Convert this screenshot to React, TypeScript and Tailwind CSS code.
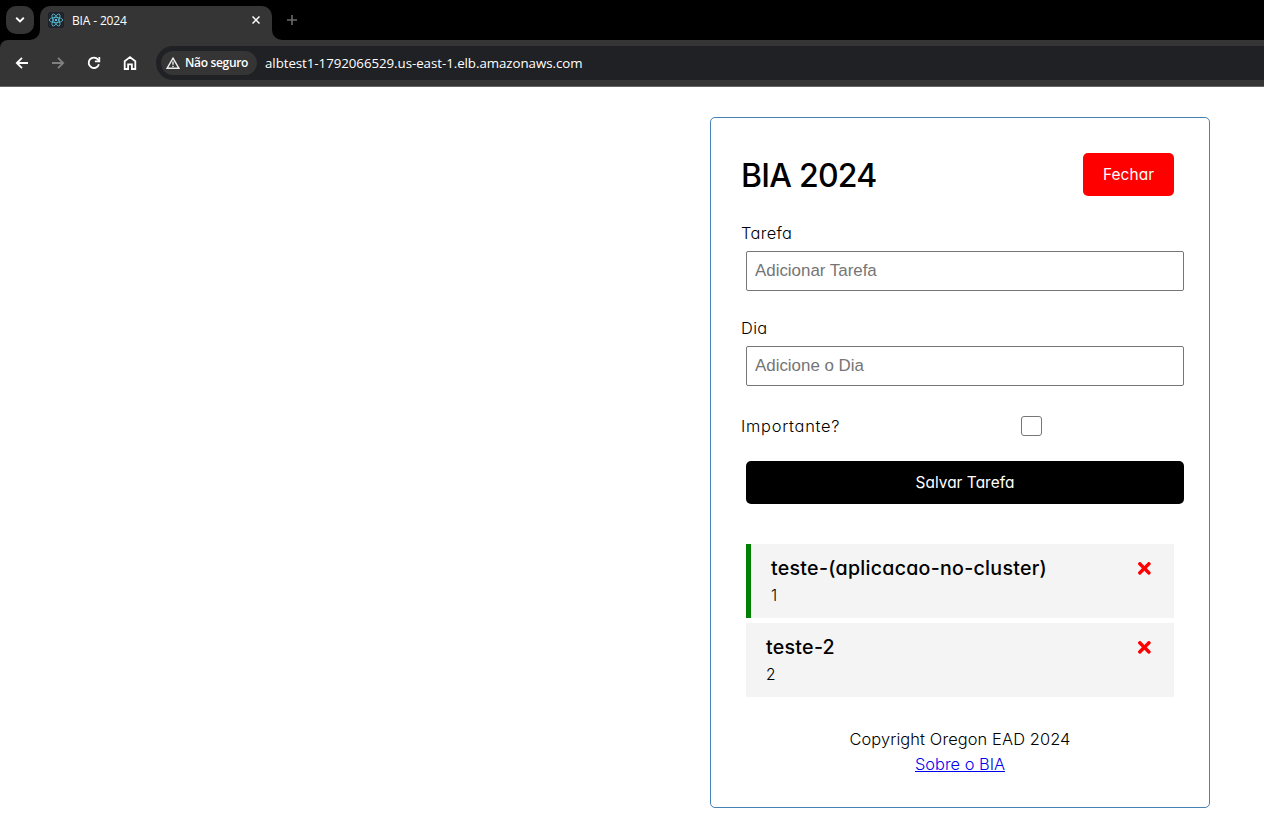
import { FaTimes } from 'react-icons/fa';

function ReactLogo() {
  return (
    <span className="flex h-4 w-4 items-center justify-center rounded-[2px] bg-[#20232a]">
      <svg width="16" height="16" viewBox="0 0 16 16" fill="none" stroke="#58c4dc" strokeWidth="0.8">
        <ellipse cx="8" cy="8" rx="6.7" ry="2.6" />
        <ellipse cx="8" cy="8" rx="6.7" ry="2.6" transform="rotate(60 8 8)" />
        <ellipse cx="8" cy="8" rx="6.7" ry="2.6" transform="rotate(120 8 8)" />
        <circle cx="8" cy="8" r="1.2" fill="#58c4dc" stroke="none" />
      </svg>
    </span>
  );
}

function TabStrip() {
  return (
    <div className="flex h-10 items-start bg-black">
      <button className="mt-1.5 ml-1.5 flex h-7 w-7 items-center justify-center rounded-[10px] bg-[#353535]">
        <svg width="10" height="6" viewBox="0 0 10 6" fill="none" stroke="#fff" strokeWidth="1.9">
          <path d="M1.2 0.8 L5 4.5 L8.8 0.8" />
        </svg>
      </button>
      <div className="relative mt-1.5 ml-1.5 flex h-[34px] w-[232px] items-center rounded-t-[10px] bg-[#353535] pb-1.5 pl-2">
        <svg className="absolute bottom-0 -left-2.5" width="10" height="10" viewBox="0 0 10 10">
          <path d="M10 0 V10 H0 A10 10 0 0 0 10 0" fill="#353535" />
        </svg>
        <svg className="absolute -right-2.5 bottom-0" width="10" height="10" viewBox="0 0 10 10">
          <path d="M0 0 V10 H10 A10 10 0 0 1 0 0" fill="#353535" />
        </svg>
        <ReactLogo />
        <span className="ml-2 pt-px font-['Open_Sans','Noto_Sans',sans-serif] text-[12px] leading-4 tracking-[-0.15px] text-white">
          BIA - 2024
        </span>
        <svg className="mr-3 ml-auto" width="8" height="8" viewBox="0 0 8 8" stroke="#fff" strokeWidth="1.5">
          <path d="M0.5 0.5 L7.5 7.5 M7.5 0.5 L0.5 7.5" />
        </svg>
      </div>
      <svg className="mt-[15px] ml-[15px]" width="10" height="10" viewBox="0 0 10 10" stroke="#6b6b6b" strokeWidth="1.6">
        <path d="M5 0 V10 M0 5 H10" />
      </svg>
    </div>
  );
}

function Toolbar() {
  return (
    <div className="bg-black">
      <div className="flex h-[47px] items-start rounded-tl-[8px] border-b border-[#666] bg-[#353535] pt-1.5">
        <div className="flex h-[34px] w-[156px] shrink-0 items-center gap-5 pl-3.5">
          <svg width="16" height="16" viewBox="0 0 16 16" fill="none" stroke="#fff" strokeWidth="1.8">
            <path d="M14 8 H3 M8 2.8 L2.8 8 L8 13.2" />
          </svg>
          <svg width="16" height="16" viewBox="0 0 16 16" fill="none" stroke="#808080" strokeWidth="1.8">
            <path d="M2 8 H13 M8 2.8 L13.2 8 L8 13.2" />
          </svg>
          <svg width="16" height="16" viewBox="0 0 16 16" fill="none" stroke="#fff" strokeWidth="1.8">
            <path d="M12.9 9.2 A5.2 5.2 0 1 1 12 4.6 L13 5.8" />
            <path d="M13.3 2 V6.4 H8.9" />
          </svg>
          <svg width="16" height="16" viewBox="0 0 16 16" fill="none" stroke="#fff" strokeWidth="1.8">
            <path d="M2.7 14 V6.3 L8 2.1 L13.3 6.3 V14 H9.9 V9.3 H6.1 V14 Z" />
          </svg>
        </div>
        <div className="flex h-[34px] flex-1 items-center rounded-l-full bg-[#202124] pl-[5px]">
          <div className="flex h-6 w-24 items-center rounded-full bg-[#353535] pl-[5px]">
            <svg width="14" height="12" viewBox="0 0 14 12" fill="none" stroke="#eee">
              <path d="M7 1.2 L12.8 11.2 H1.2 Z" strokeWidth="1.4" />
              <path d="M7 4.6 V7.8 M7 8.7 V10" strokeWidth="1.4" />
            </svg>
            <span className="ml-[5px] whitespace-nowrap font-['Open_Sans','Noto_Sans',sans-serif] text-[12px] font-semibold tracking-[-0.33px] text-white">
              Não seguro
            </span>
          </div>
          <span className="ml-2 pt-0.5 whitespace-nowrap font-['Open_Sans','Noto_Sans',sans-serif] text-[13.3px] tracking-[-0.05px] text-white">
            albtest1-1792066529.us-east-1.elb.amazonaws.com
          </span>
        </div>
      </div>
    </div>
  );
}

function Field({ label, placeholder }: { label: string; placeholder: string }) {
  return (
    <label className="mb-[25px] block">
      <span className="block h-[25px] tracking-[0.35px]">{label}</span>
      <input
        type="text"
        placeholder={placeholder}
        className="m-[5px] block h-10 w-full rounded-[2px] border border-[#767676] bg-white px-2 pb-px font-['Liberation_Sans',Arial,sans-serif] text-[16.9px] font-normal outline-none placeholder:text-[#757575]"
      />
    </label>
  );
}

function Task({ title, day, reminder }: { title: string; day: string; reminder?: boolean }) {
  return (
    <li
      className={
        reminder
          ? 'h-[74px] border-l-[5px] border-[#008000] bg-[#f4f4f4] px-5 py-2.5'
          : 'h-[74px] bg-[#f4f4f4] px-5 py-2.5'
      }
    >
      <h3 className="flex h-[29px] items-center justify-between text-[19.6px] font-medium tracking-[0.27px]">
        {title}
        <FaTimes color="red" size={18.72} />
      </h3>
      <p className="h-[25px] text-[15.6px] leading-[26px]">{day}</p>
    </li>
  );
}

export default function App() {
  return (
    <div className="h-[833px] w-full overflow-hidden bg-white">
      <TabStrip />
      <Toolbar />
      <main className="mt-[30px] ml-[710px] h-[691px] w-[500px] rounded-[5px] border border-[#4682b4] p-[30px] font-['Inter',sans-serif] text-[16.4px] leading-[25px] font-light text-black [font-feature-settings:'cv11']">
        <header className="mb-5 flex h-[53px] items-center justify-between pr-[5px]">
          <h1 className="pt-px text-[32px] leading-[51px] font-medium tracking-[-0.75px]">BIA 2024</h1>
          <button className="h-[43px] w-[91px] rounded-[5px] bg-[#ff0000] text-[15.4px] font-normal tracking-[0.1px] text-white">
            Fechar
          </button>
        </header>
        <form>
          <Field label="Tarefa" placeholder="Adicionar Tarefa" />
          <Field label="Dia" placeholder="Adicione o Dia" />
          <label className="mt-7 flex h-[25px] items-center">
            <span className="flex-1 tracking-[0.75px]">Importante?</span>
            <input
              type="checkbox"
              className="mr-[137px] mb-0.5 h-5 w-[21px] appearance-none rounded-[3px] border border-[#767676] bg-white"
            />
          </label>
          <button
            type="button"
            className="mt-[22px] ml-[5px] block h-[43px] w-full rounded-[5px] bg-black text-[15.4px] font-normal tracking-[0.05px] text-white"
          >
            Salvar Tarefa
          </button>
        </form>
        <ul className="mt-10 mr-[5px] ml-[5px] flex flex-col gap-[5px]">
          <Task title="teste-(aplicacao-no-cluster)" day="1" reminder />
          <Task title="teste-2" day="2" />
        </ul>
        <footer className="mt-[30px] text-center">
          <p className="tracking-[0.12px]">Copyright Oregon EAD 2024</p>
          <a href="#sobre" className="text-[#0000ee] underline">
            Sobre o BIA
          </a>
        </footer>
      </main>
    </div>
  );
}
